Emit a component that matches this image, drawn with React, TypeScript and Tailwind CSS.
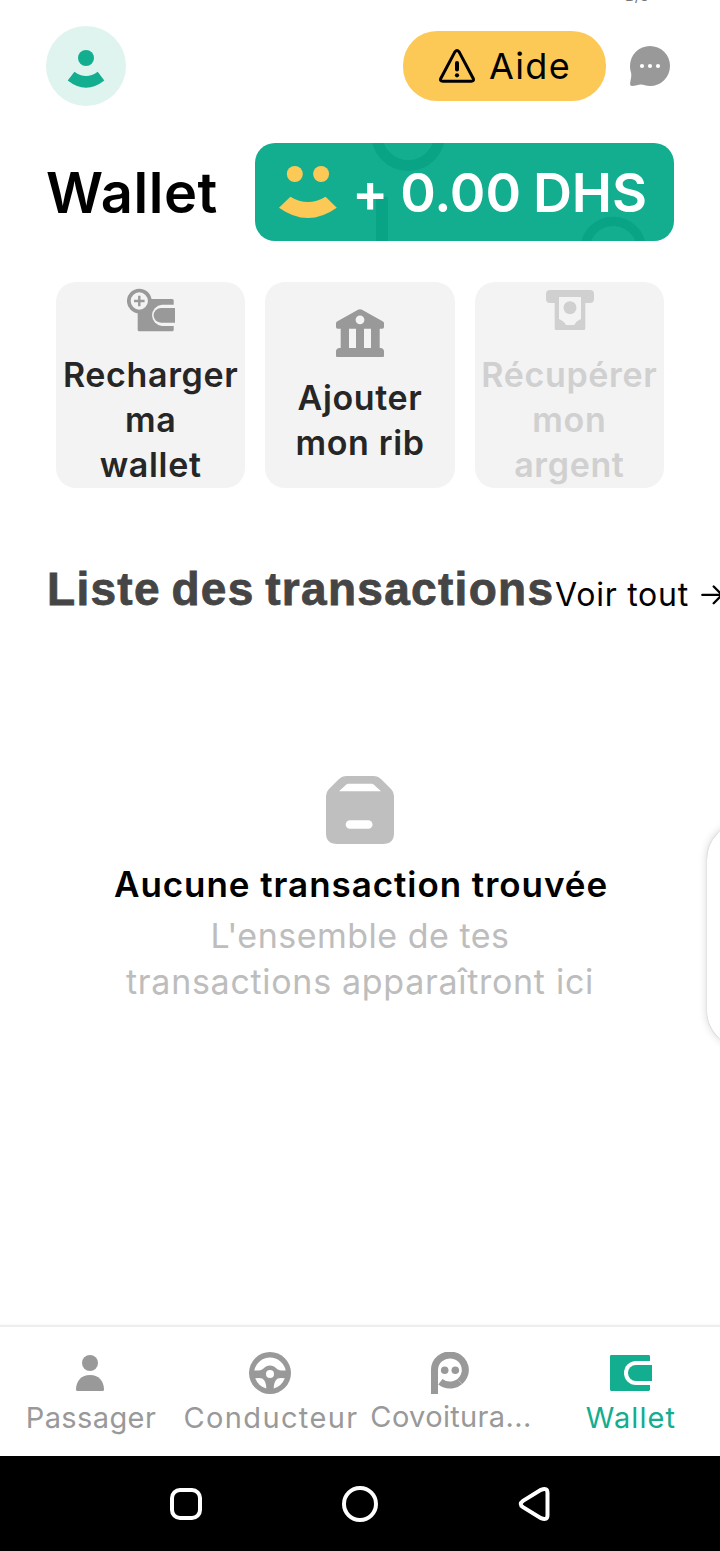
import type { ReactNode } from "react";

function ProfileIcon() {
  return (
    <svg className="size-20 fill-[#13ad8f]" viewBox="46 26 80 80">
      <circle cx="86" cy="58" r="8" />
      <path d="M74.5 71.7Q86 80.3 97.7 71.7L104.3 80.6Q86 95 67.7 80.6Z" />
    </svg>
  );
}

function WarningIcon() {
  return (
    <svg className="h-9 w-9" viewBox="439 48 36 36" fill="none" stroke="#000" strokeWidth="3" strokeLinejoin="round">
      <path d="M454.9 51.9L440.9 78.2Q439.6 81.2 442.8 81.2H471.2Q474.4 81.2 473.1 78.2L459.1 51.9Q457 49.3 454.9 51.9Z" />
      <path d="M457 63V69.5" strokeWidth="4" strokeLinecap="round" />
      <circle cx="457" cy="75.3" r="2.1" fill="#000" stroke="none" />
    </svg>
  );
}

function ChatIcon() {
  return (
    <svg className="size-10" viewBox="630 46 40 40">
      <path
        fill="#999"
        d="M630 66A20 20 0 1 1 650 86C646 86 643.5 84.6 641 84.6C638 84.6 635.5 85.9 632 86Q629.8 86 630.1 83.8C630.4 80 631.3 78.5 631.3 75Q631.3 73 630.6 71Q630 69 630 66Z"
      />
      <g fill="#fff">
        <circle cx="642" cy="66" r="2.1" />
        <circle cx="650" cy="66" r="2.1" />
        <circle cx="658" cy="66" r="2.1" />
      </g>
    </svg>
  );
}

function BalanceBackdrop() {
  return (
    <svg className="absolute inset-0 h-full w-full" viewBox="255 143 419 98" fill="none" stroke="#09a386">
      <circle cx="408.2" cy="134.2" r="31.4" strokeWidth="10.8" />
      <path d="M382 197V245" strokeWidth="12" />
      <circle cx="613.2" cy="249.5" r="28.2" strokeWidth="9.2" />
    </svg>
  );
}

function SmileIcon() {
  return (
    <svg className="h-[54px] w-[58px] shrink-0 fill-[#fcc957]" viewBox="279 165 58 54">
      <circle cx="294.8" cy="174" r="8" />
      <circle cx="321.1" cy="174" r="8" />
      <path d="M290.4 196.7Q307.8 207.5 325.6 196.7L336.8 207.7Q307.8 228.3 279 207.7Z" />
    </svg>
  );
}

function RechargeIcon() {
  return (
    <svg className="size-12" viewBox="127 286 48 48">
      <rect x="137.7" y="299" width="36" height="32.3" rx="1.5" fill="#999" />
      <path d="M176 304.7H162A11 10.7 0 0 0 162 326H176Z" fill="#f3f3f3" />
      <path d="M175 308H161A7.4 7.35 0 0 0 161 322.7H175Z" fill="#999" />
      <circle cx="139.3" cy="301" r="10.5" fill="#f3f3f3" stroke="#999" strokeWidth="3.7" />
      <path d="M134 301H144.6M139.3 295.7V306.3" stroke="#999" strokeWidth="2.4" />
    </svg>
  );
}

function BankIcon() {
  return (
    <svg className="size-12" viewBox="336 309 48 48">
      <path
        fill="#999"
        d="M358 309.8Q360 308.6 362 309.8L383 321.6Q384 322.2 384 323.5V327Q384 328.7 382.3 328.7H379.7V348H381Q384 348.5 384 351.5V356Q384 357 383 357H337Q336 357 336 356V351.5Q336 348.5 339 348H340.7V328.7H337.7Q336 328.7 336 327V323.5Q336 322.2 337 321.6Z"
      />
      <path d="M349 328.7H356V348H349ZM364 328.7H371V348H364Z" fill="#f3f3f3" />
      <circle cx="360" cy="319.8" r="4.4" fill="#f3f3f3" />
    </svg>
  );
}

function WithdrawIcon() {
  return (
    <svg className="ml-px size-12" viewBox="546 286 48 48">
      <path
        fill="#d0d0d0"
        d="M550 290H590Q594 290 594 294V299Q594 303 590 303H585.3V328.5Q585.3 330 583.8 330H556.2Q554.7 330 554.7 328.5V303H550Q546 303 546 299V294Q546 290 550 290Z"
      />
      <path d="M559 297H581V319Q576 321 574.3 325H566Q564 321 559 319Z" fill="#f3f3f3" />
      <circle cx="570" cy="307.7" r="6.5" fill="#d0d0d0" />
    </svg>
  );
}

function BoxIcon() {
  return (
    <svg className="size-[68px]" viewBox="326 776 68 68">
      <path
        fill="#bfbfbf"
        d="M346 776H374Q378 776 381 779L391 789Q394 792 394 796V833Q394 844 383 844H337Q326 844 326 833V796Q326 792 329 789L339 779Q342 776 346 776Z"
      />
      <path d="M348.5 783.8H371.5Q373 783.8 374.2 785L381 791.3H339L345.8 785Q347 783.8 348.5 783.8Z" fill="#fff" />
      <rect x="345.7" y="820.2" width="26.8" height="8.6" rx="4.3" fill="#fff" />
    </svg>
  );
}

function PassengerIcon() {
  return (
    <svg className="size-[42px] fill-[#999]" viewBox="69 1352 42 42">
      <circle cx="90" cy="1363" r="8" />
      <path d="M76 1389.5C76 1381 81.5 1375 90 1375S104 1381 104 1389.5Q104 1391 102.5 1391H77.5Q76 1391 76 1389.5Z" />
    </svg>
  );
}

function WheelIcon() {
  return (
    <svg className="size-[42px]" viewBox="249 1352 42 42">
      <circle cx="270" cy="1373" r="21" fill="#999" />
      <g fill="#fff">
        <path d="M254.3 1370.4A16 16 0 0 1 285.7 1370.4H281.5C276.5 1370.4 275.5 1365.4 270 1365.4S263.5 1370.4 258.5 1370.4Z" />
        <path d="M255.2 1378.3Q260 1377.6 262.3 1378.5Q266.5 1381.5 266.3 1388.4Q258.5 1386.6 255.2 1378.3Z" />
        <path d="M284.8 1378.3Q280 1377.6 277.7 1378.5Q273.5 1381.5 273.7 1388.4Q281.5 1386.6 284.8 1378.3Z" />
        <circle cx="270" cy="1374" r="4" />
      </g>
    </svg>
  );
}

function CarpoolIcon() {
  return (
    <svg className="size-[42px]" viewBox="429 1352 42 42" fill="none">
      <path d="M434.5 1394V1370.5A15.4 15 0 1 1 440.4 1381.8" stroke="#999" strokeWidth="7" />
      <path d="M458.5 1380.5L462 1384" stroke="#ccc" strokeWidth="0.7" />
      <circle cx="444.7" cy="1370.3" r="3.8" fill="#999" />
      <circle cx="455.3" cy="1370.3" r="3.8" fill="#999" />
    </svg>
  );
}

function WalletIcon() {
  return (
    <svg className="h-[42px] w-11" viewBox="608 1352 44 42">
      <rect x="610" y="1355" width="40" height="36" rx="1.4" fill="#13ad8f" />
      <path d="M652 1361H636A12 12 0 0 0 636 1385H652Z" fill="#fff" />
      <path d="M652 1365H636A8 8 0 0 0 636 1381H652Z" fill="#13ad8f" />
    </svg>
  );
}

function ActionCard({ icon, children, muted }: { icon: ReactNode; children: ReactNode; muted?: boolean }) {
  return (
    <button
      className={`flex flex-col items-center justify-center rounded-[20px] bg-[#f3f3f3] text-[34px] leading-[45px] font-semibold tracking-[0.65px] whitespace-nowrap ${
        muted ? "text-[#d0d0d0]" : "text-[#262626]"
      }`}
    >
      <span className="mt-[3px] mb-[18px] block">{icon}</span>
      {children}
    </button>
  );
}

function NavItem({ icon, children, active }: { icon: ReactNode; children: ReactNode; active?: boolean }) {
  return (
    <a
      className={`flex w-[180px] flex-col items-center gap-1 text-[29px] leading-10 whitespace-nowrap ${
        active ? "text-[#13ad8f]" : "text-[#999]"
      }`}
    >
      {icon}
      {children}
    </a>
  );
}

export default function App() {
  return (
    <div className="relative flex h-[1551px] w-[720px] flex-col overflow-hidden bg-white font-['Inter',sans-serif] text-black">
      <span className="absolute -top-[14px] left-[625px] text-[15px] leading-[20px] text-[#777]">B/s</span>

      <header className="flex h-[131px] items-center pt-px pr-[50px] pl-[46px]">
        <div className="size-20 rounded-full bg-[#dff3ef]">
          <ProfileIcon />
        </div>
        <button className="ml-auto flex h-[70px] w-[203px] items-center rounded-[34px] bg-[#fcc957] pl-9">
          <WarningIcon />
          <span className="ml-[14px] text-[36px] leading-[44px] tracking-[1.3px]">Aide</span>
        </button>
        <button className="ml-6">
          <ChatIcon />
        </button>
      </header>

      <section className="mt-3 flex h-[98px] items-center pr-[46px] pl-[46px]">
        <h1 className="pt-0.5 text-[56px] leading-[70px] font-semibold tracking-[0.6px]">Wallet</h1>
        <div className="relative ml-auto flex h-[98px] w-[419px] items-center overflow-hidden rounded-[20px] bg-[#13ad8f] pl-6 text-white">
          <BalanceBackdrop />
          <div className="relative flex items-center">
            <SmileIcon />
            <span className="ml-[15px] pt-0.5 text-[54px] leading-[70px] font-semibold tracking-[-0.1px] [word-spacing:-1.5px] whitespace-nowrap">
              + 0.00 DHS
            </span>
          </div>
        </div>
      </section>

      <section className="mx-14 mt-[41px] grid h-[206px] grid-cols-3 gap-5">
        <ActionCard icon={<RechargeIcon />}>
          <span>Recharger</span>
          <span>ma</span>
          <span>wallet</span>
        </ActionCard>
        <ActionCard icon={<BankIcon />}>
          <span>Ajouter</span>
          <span>mon rib</span>
        </ActionCard>
        <ActionCard icon={<WithdrawIcon />} muted>
          <span>Récupérer</span>
          <span>mon</span>
          <span>argent</span>
        </ActionCard>
      </section>

      <section className="mt-[71px] flex h-[60px] items-center pl-[47px] whitespace-nowrap">
        <h2 className="w-[508px] shrink-0 font-['Liberation_Sans',sans-serif] text-[46px] leading-[60px] font-bold tracking-[1.3px] [word-spacing:-3.5px] text-[#454545] [-webkit-text-stroke:0.8px_#454545]">
          Liste des transactions
        </h2>
        <a className="flex shrink-0 items-center pt-[11px]">
          <span className="w-[146px] text-[32px] leading-10 tracking-[0.75px]">Voir tout</span>
          <svg className="h-5 w-6" viewBox="701 585 24 20" fill="none" stroke="#000" strokeWidth="2.3" strokeLinecap="round" strokeLinejoin="round">
            <path d="M702.3 594.9H722M713.7 586.5L722 594.9L713.7 603.3" />
          </svg>
        </a>
      </section>

      <section className="mt-[157px] flex flex-col items-center whitespace-nowrap">
        <BoxIcon />
        <h3 className="mt-4 ml-0.5 text-[35px] leading-[48px] font-semibold tracking-[0.95px]">
          Aucune transaction trouvée
        </h3>
        <p className="mt-[5px] text-center text-[34px] leading-[46px] tracking-[0.7px] text-[#bdbdbd]">
          <span className="tracking-[0.5px]">L'ensemble de tes</span>
          <br />
          transactions apparaîtront ici
        </p>
      </section>

      <div className="absolute top-[823px] left-[707px] h-[224px] w-[80px] rounded-[36px] bg-white shadow-[0_0_8px_rgba(0,0,0,0.18),0_0_1px_rgba(0,0,0,0.3)]" />

      <nav className="mt-auto flex h-[131px] shrink-0 border-t-2 border-[#eeeeee] bg-white pt-[25px] shadow-[0_-1px_2px_rgba(0,0,0,0.03)]">
        <NavItem icon={<PassengerIcon />}>
          <span className="pl-0.5 tracking-[0.4px]">Passager</span>
        </NavItem>
        <NavItem icon={<WheelIcon />}>
          <span className="pl-0.5 tracking-[1.35px]">Conducteur</span>
        </NavItem>
        <NavItem icon={<CarpoolIcon />}>
          <span className="-mt-px pl-0.5 tracking-[0.35px]">Covoitura...</span>
        </NavItem>
        <NavItem icon={<WalletIcon />} active>
          <span className="pl-0.5 tracking-[1.1px]">Wallet</span>
        </NavItem>
      </nav>

      <footer className="flex h-[95px] shrink-0 items-start justify-center gap-[134px] bg-black pt-7">
        <svg className="size-10" viewBox="166 1484 40 40" fill="none" stroke="#fff" strokeWidth="4">
          <rect x="172" y="1490" width="28" height="28" rx="8" />
        </svg>
        <svg className="size-10" viewBox="340 1484 40 40" fill="none" stroke="#fff" strokeWidth="4">
          <circle cx="360" cy="1504" r="16" />
        </svg>
        <svg className="size-10" viewBox="514 1484 40 40" fill="none" stroke="#fff" strokeWidth="4">
          <path d="M541 1489.8L523 1500.8Q518.5 1504 523 1507.2L541 1518.2Q547.5 1521 547.5 1515V1493Q547.5 1487 541 1489.8Z" />
        </svg>
      </footer>
    </div>
  );
}
